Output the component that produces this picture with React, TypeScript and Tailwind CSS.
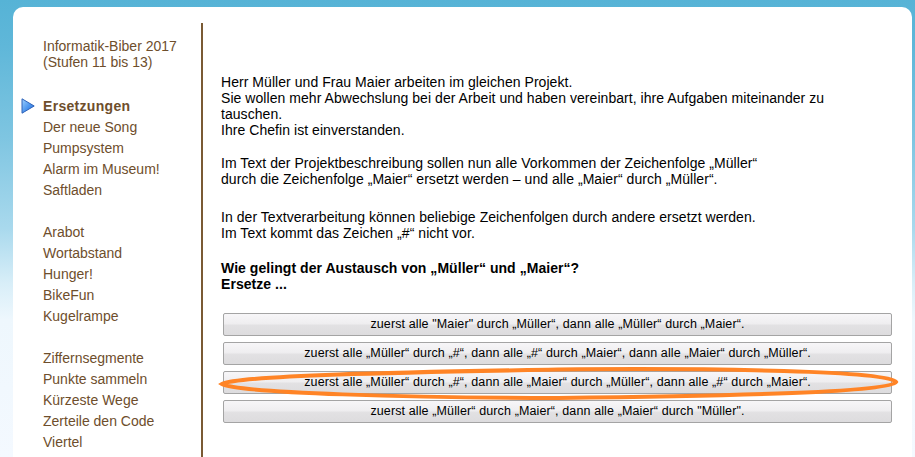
import React from "react";

const groups: string[][] = [
  ["Ersetzungen", "Der neue Song", "Pumpsystem", "Alarm im Museum!", "Saftladen"],
  ["Arabot", "Wortabstand", "Hunger!", "BikeFun", "Kugelrampe"],
  ["Ziffernsegmente", "Punkte sammeln", "Kürzeste Wege", "Zerteile den Code", "Viertel"],
];

const answers = [
  "zuerst alle \"Maier\" durch „Müller“, dann alle „Müller“ durch „Maier“.",
  "zuerst alle „Müller“ durch „#“, dann alle „#“ durch „Maier“, dann alle „Maier“ durch „Müller“.",
  "zuerst alle „Müller“ durch „#“, dann alle „Maier“ durch „Müller“, dann alle „#“ durch „Maier“.",
  "zuerst alle „Müller“ durch „Maier“, dann alle „Maier“ durch \"Müller\".",
];

function Arrow() {
  return (
    <svg width="14" height="16" viewBox="0 0 14 16" className="absolute left-[-22px] top-[2px]">
      <defs>
        <linearGradient id="arrowFill" x1="0" y1="0" x2="1" y2="1">
          <stop offset="0%" stopColor="#9fd2ff" />
          <stop offset="55%" stopColor="#4a94ee" />
          <stop offset="100%" stopColor="#2a66cc" />
        </linearGradient>
      </defs>
      <path d="M1 0.8 L13.2 8 L1 15.2 Z" fill="url(#arrowFill)" stroke="#2f62b8" strokeWidth="1" strokeLinejoin="round" />
    </svg>
  );
}

export default function App() {
  return (
    <div className="w-[915px] h-[457px] overflow-hidden pt-[7px] pl-[13px] pr-[3px] font-['Liberation_Sans',Arial,sans-serif] bg-[linear-gradient(to_bottom,#56b3d6_0%,#5fb7d9_10%,#7ec5e1_30%,#a9d9ed_50%,#d8eef8_62%,#eef7fd_70%,#f4f9ff_100%)]">
      <div className="h-[450px] bg-white rounded-t-[10px] flex">
        {/* sidebar */}
        <div className="w-[190px] shrink-0 mt-[16px] border-r-2 border-[#7a5a34] pl-[30px] pt-[15px] text-[14px] text-[#6e4e2c]">
          <div className="leading-[16px]">
            Informatik-Biber 2017
            <br />
            (Stufen 11 bis 13)
          </div>
          <div className="mt-[26px] leading-[21px]">
            {groups.map((g, gi) => (
              <div key={gi} className={gi > 0 ? "mt-[21px]" : ""}>
                {g.map((item, i) => (
                  <div key={item} className={gi === 0 && i === 0 ? "relative font-bold tracking-[0.3px]" : ""}>
                    {gi === 0 && i === 0 && <Arrow />}
                    {item}
                  </div>
                ))}
              </div>
            ))}
          </div>
        </div>

        {/* main */}
        <div className="flex-1 pl-[18px] pr-[14px] pt-[67px] text-[14px] tracking-[0.05px] leading-[16px] text-black">
          <p className="mb-[17px]">
            Herr Müller und Frau Maier arbeiten im gleichen Projekt.
            <br />
            Sie wollen mehr Abwechslung bei der Arbeit und haben vereinbart, ihre Aufgaben miteinander zu
            <br />
            tauschen.
            <br />
            Ihre Chefin ist einverstanden.
          </p>
          <p className="mb-[22px]">
            Im Text der Projektbeschreibung sollen nun alle Vorkommen der Zeichenfolge „Müller“
            <br />
            durch die Zeichenfolge „Maier“ ersetzt werden – und alle „Maier“ durch „Müller“.
          </p>
          <p className="mb-[19px]">
            In der Textverarbeitung können beliebige Zeichenfolgen durch andere ersetzt werden.
            <br />
            Im Text kommt das Zeichen „#“ nicht vor.
          </p>
          <p className="mb-[21px] font-bold">
            Wie gelingt der Austausch von „Müller“ und „Maier“?
            <br />
            Ersetze ...
          </p>

          <div className="relative ml-[2px] w-[669px] flex flex-col gap-[6px]">
            {answers.map((a) => (
              <button
                key={a}
                className="h-[23px] w-full rounded-[2px] border border-[#a4a4a4] bg-[linear-gradient(to_bottom,#f7f6f8_0%,#efeef0_45%,#e2e1e3_55%,#dddcde_100%)] text-[12.5px] tracking-[0.12px] leading-[21px] text-black text-center font-['Liberation_Sans',Arial,sans-serif]"
              >
                {a}
              </button>
            ))}
            <svg
              width="684"
              height="38"
              viewBox="0 0 684 38"
              className="absolute left-[-5px] top-[52px] pointer-events-none"
            >
              <path
                d="M4 19 C 20 10, 200 7, 340 4.5 C 500 3, 670 6, 678 17 C 672 27, 520 31, 340 33 C 200 33, 18 28, 4 19 Z"
                fill="none"
                stroke="#ff8426"
                strokeWidth="4"
              />
            </svg>
          </div>
        </div>
      </div>
    </div>
  );
}
